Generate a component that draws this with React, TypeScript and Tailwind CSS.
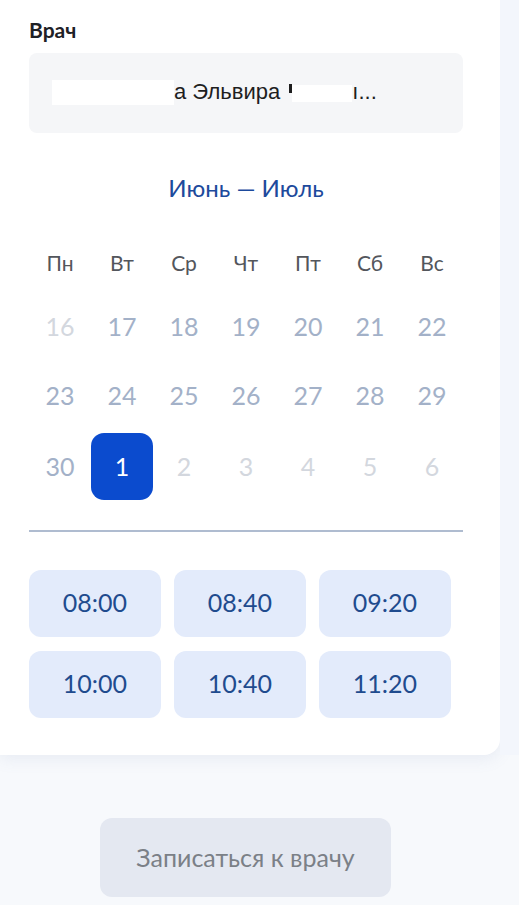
import React from "react";

const weekdays = ["Пн", "Вт", "Ср", "Чт", "Пт", "Сб", "Вс"];
type Day = { n: number; kind: "past" | "avail" | "sel" | "future" };
const rows: Day[][] = [
  [
    { n: 16, kind: "past" },
    { n: 17, kind: "avail" },
    { n: 18, kind: "avail" },
    { n: 19, kind: "avail" },
    { n: 20, kind: "avail" },
    { n: 21, kind: "avail" },
    { n: 22, kind: "avail" },
  ],
  [
    { n: 23, kind: "avail" },
    { n: 24, kind: "avail" },
    { n: 25, kind: "avail" },
    { n: 26, kind: "avail" },
    { n: 27, kind: "avail" },
    { n: 28, kind: "avail" },
    { n: 29, kind: "avail" },
  ],
  [
    { n: 30, kind: "avail" },
    { n: 1, kind: "sel" },
    { n: 2, kind: "future" },
    { n: 3, kind: "future" },
    { n: 4, kind: "future" },
    { n: 5, kind: "future" },
    { n: 6, kind: "future" },
  ],
];
const times = ["08:00", "08:40", "09:20", "10:00", "10:40", "11:20"];

export default function App() {
  return (
    <div
      className="min-h-[905px] w-[519px] bg-[#f7f9fc] overflow-hidden"
      style={{ fontFamily: "Lato, 'Noto Sans', sans-serif" }}
    >
      <div className="flex">
        <div className="w-[500px] bg-white rounded-br-[16px] shadow-[0_4px_16px_rgba(120,140,180,0.12)] pl-[29px] pr-[37px] pt-[16px] pb-[37px]">
          <div className="text-[21px] font-bold text-[#1e2126] leading-[28px]">Врач</div>
          <div className="mt-[9px] h-[80px] w-[434px] rounded-[8px] bg-[#f5f6f8] flex items-center pl-[23px] pb-[2px]">
            <div
              className="flex items-center text-[22px] leading-[28px] text-[#1e1e1e]"
              style={{ fontFamily: "'Liberation Sans', Arial, sans-serif" }}
            >
              <span className="inline-block w-[122px] h-[25px] bg-white"></span>
              <span className="whitespace-pre">а Эльвира </span>
              <span className="inline-block w-[3px] h-[9px] bg-[#1e1e1e] ml-[3px] -mt-[8px]"></span>
              <span className="inline-block w-[60px] h-[17px] bg-white mt-[2px]"></span>
              <span>ı...</span>
            </div>
          </div>

          <div className="mt-[39px] text-center text-[24px] text-[#1d4a9c] leading-[32px]">
            Июнь — Июль
          </div>

          <div className="mt-[45px] grid grid-cols-7 w-[434px]">
            {weekdays.map((w) => (
              <div key={w} className="text-center text-[21px] text-[#53565c] leading-[28px]">
                {w}
              </div>
            ))}
          </div>

          <div className="mt-[16px] flex flex-col gap-[1px] w-[434px]">
            {rows.map((r, i) => (
              <div key={i} className="grid grid-cols-7 h-[68px]">
                {r.map((d) => (
                  <div key={d.n} className="flex items-center justify-center pb-[2px]">
                    {d.kind === "sel" ? (
                      <div className="w-[62px] h-[67px] rounded-[13px] bg-[#0b4bce] flex items-center justify-center text-white text-[25px] leading-[30px] pb-[2px] mt-[2px]">
                        {d.n}
                      </div>
                    ) : (
                      <span
                        className={
                          "text-[25px] leading-[30px] " +
                          (d.kind === "avail"
                            ? "text-[#a3b1c8]"
                            : "text-[#d3d7de]")
                        }
                      >
                        {d.n}
                      </span>
                    )}
                  </div>
                ))}
              </div>
            ))}
          </div>

          <div className="mt-[31px] h-[2px] w-[434px] bg-[#afbcd0]"></div>

          <div className="mt-[38px] grid grid-cols-[132px_132px_132px] gap-x-[13px] gap-y-[14px]">
            {times.map((t) => (
              <div
                key={t}
                className="h-[67px] rounded-[12px] bg-[#e3ebfb] flex items-center justify-center text-[25px] leading-[30px] text-[#1f4b8e] pb-[4px]"
              >
                {t}
              </div>
            ))}
          </div>
        </div>
        <div className="flex-1 bg-[#f3f6fc]"></div>
      </div>

      <div className="mt-[63px] flex">
        <div className="ml-[100px] w-[291px] h-[79px] rounded-[12px] bg-[#e4e8f1] flex items-center justify-center text-[25px] leading-[30px] text-[#7b8087] pb-[2px]">
          Записаться к врачу
        </div>
      </div>
    </div>
  );
}
